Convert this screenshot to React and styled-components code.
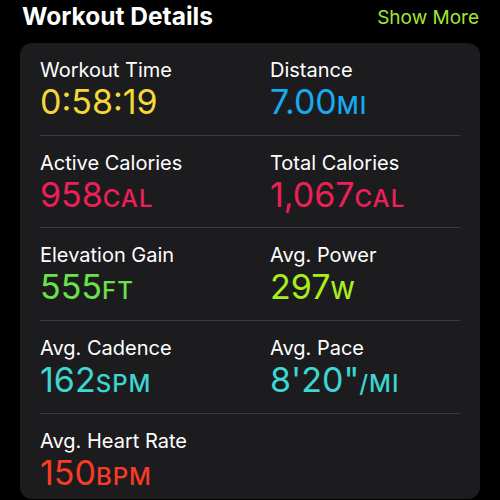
import React from 'react'
import styled, { createGlobalStyle } from 'styled-components';

const GlobalStyle = createGlobalStyle`
html,body{
  margin:0;
  padding:0;
  background:#000;
}
body{
  font-family:Inter,"Liberation Sans",sans-serif;
  -webkit-font-smoothing:antialiased;
}
`;

const Page = styled.div`
width:500px;
height:500px;
overflow:hidden;
background:#000;
display:flex;
flex-direction:column;
`;

const Header = styled.div`
flex-shrink:0;
height:43px;
display:flex;
justify-content:space-between;
align-items:flex-start;
padding:0 21px 0 22px;
box-sizing:border-box;
`;

const Title = styled.h2`
margin:0;
margin-top:1px;
font-size:24.5px;
line-height:30px;
font-weight:700;
color:#fff;
`;

const ShowMore = styled.button`
background:none;
border:none;
padding:0;
margin-top:6px;
font-family:inherit;
font-size:19px;
line-height:24px;
color:#a3e633;
`;

const Card = styled.div`
flex-shrink:0;
margin:0 20px;
background:#1c1c1e;
border-radius:12px;
padding:0 20px;
`;

const Row = styled.div`
display:grid;
grid-template-columns:230px 1fr;
height:${p => p.last ? '85px' : '91.7px'};
border-bottom:${p => p.last ? 'none' : '1px solid #3a3a3c'};
`;

const Stat = styled.div`
display:flex;
flex-direction:column;
padding-top:15px;
`;

const Label = styled.div`
font-size:20px;
line-height:24px;
color:#fff;
`;

const Value = styled.div`
margin-top:1px;
font-size:34px;
line-height:38px;
font-weight:400;
color:${p => p.color};
white-space:nowrap;
`;

const Unit = styled.span`
font-size:24px;
font-weight:500;
text-transform:uppercase;
letter-spacing:1px;
`;

const rows = [
  [
    { label: 'Workout Time', value: '0:58:19', color: '#f4d838' },
    { label: 'Distance', value: '7.00', unit: 'mi', color: '#17aaf0' },
  ],
  [
    { label: 'Active Calories', value: '958', unit: 'cal', color: '#ee1f57' },
    { label: 'Total Calories', value: '1,067', unit: 'cal', color: '#ee1f57' },
  ],
  [
    { label: 'Elevation Gain', value: '555', unit: 'ft', color: '#68e34a' },
    { label: 'Avg. Power', value: '297', unit: 'w', color: '#a9ee1e' },
  ],
  [
    { label: 'Avg. Cadence', value: '162', unit: 'spm', color: '#3dd6d0' },
    { label: 'Avg. Pace', value: '8\'20"', unit: '/mi', color: '#3dd6d0' },
  ],
  [
    { label: 'Avg. Heart Rate', value: '150', unit: 'bpm', color: '#fa3b26' },
  ],
];

const App = () => {
  return (
    <Page>
      <GlobalStyle />
      <Header>
        <Title>Workout Details</Title>
        <ShowMore>Show More</ShowMore>
      </Header>
      <Card>
        {rows.map((row, i) => (
          <Row key={i} last={i === rows.length - 1}>
            {row.map(stat => (
              <Stat key={stat.label}>
                <Label>{stat.label}</Label>
                <Value color={stat.color}>
                  {stat.value}
                  {stat.unit && <Unit>{stat.unit}</Unit>}
                </Value>
              </Stat>
            ))}
          </Row>
        ))}
      </Card>
    </Page>
  )
}
export default App;
